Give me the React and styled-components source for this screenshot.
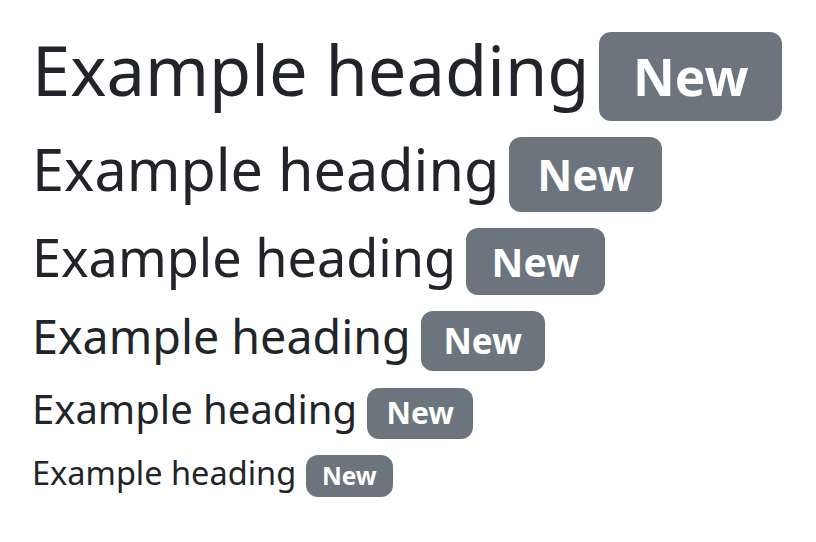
import React from 'react';
import styled, { createGlobalStyle } from 'styled-components';

const GlobalStyle = createGlobalStyle`
    html, body {
        margin: 0;
        padding: 0;
        background: #fff;
    }
    body {
        font-family: "Noto Sans", "Open Sans", sans-serif;
        color: #212529;
    }
`;

const Page = styled.div`
    padding: 29px 32px;
`;

const Heading = styled.div`
    margin: 0 0 14px;
    font-size: ${props => props.size}px;
    font-weight: 400;
    line-height: 1.2;
    white-space: nowrap;
`;

const Badge = styled.span`
    display: inline-block;
    margin-left: 10px;
    padding: 0.36em 0.65em;
    font-size: 0.75em;
    font-weight: 700;
    line-height: 1;
    color: #fff;
    text-align: center;
    white-space: nowrap;
    vertical-align: baseline;
    border-radius: 12px;
    background-color: #6c757d;
`;

// h1..h6 sizes
const levels = [
    { tag: 'h1', size: 68.6 },
    { tag: 'h2', size: 57.5 },
    { tag: 'h3', size: 52.2 },
    { tag: 'h4', size: 46.6 },
    { tag: 'h5', size: 40 },
    { tag: 'h6', size: 32.5 }
];

export default function App() {
    return (
        <Page>
            <GlobalStyle />
            {levels.map(level => (
                <Heading as={level.tag} key={level.tag} size={level.size}>
                    Example heading<Badge>New</Badge>
                </Heading>
            ))}
        </Page>
    );
}
